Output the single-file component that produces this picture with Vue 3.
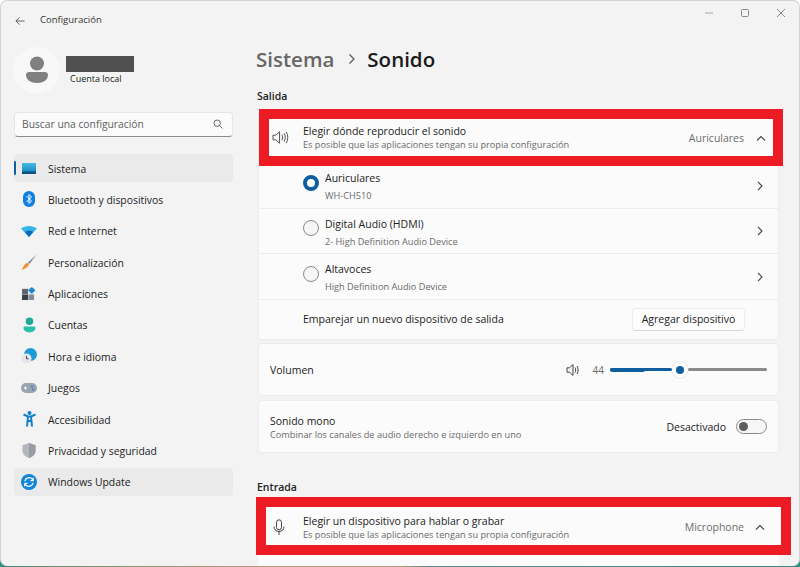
<template>
  <div class="desk">
    <div class="win">
      <div class="titlebar">
        <svg class="back" width="10" height="10" viewBox="0 0 11 10"><path d="M10.500 5H1M5 1 1 5l4 4" fill="none" stroke="#555" stroke-width="1"/></svg>
        <span class="app-title">Configuración</span>
        <div class="win-btns">
          <svg width="10" height="10" viewBox="0 0 10 10"><path d="M1 5h8" stroke="#aaa" fill="none"/></svg>
          <svg width="10" height="10" viewBox="0 0 10 10"><rect x="1.500" y="1.500" width="7" height="7" rx="1" stroke="#888" fill="none"/></svg>
          <svg width="10" height="10" viewBox="0 0 10 10"><path d="M1 1l8 8M9 1l-8 8" stroke="#888" fill="none"/></svg>
        </div>
      </div>

      <div class="body">
        <aside class="side">
          <div class="profile">
            <div class="avatar">
              <svg width="24" height="28" viewBox="0 0 24 28">
                <circle cx="12" cy="7.500" r="7" fill="#808080"/>
                <path d="M1 19c0-2 1.500-3 3-3h16c1.500 0 3 1 3 3 0 5-5 8-11 8S1 24 1 19z" fill="#808080"/>
              </svg>
            </div>
            <div class="who">
              <div class="redacted"></div>
              <div class="local">Cuenta local</div>
            </div>
          </div>

          <div class="search">
            <span>Buscar una configuración</span>
            <svg width="10" height="10" viewBox="0 0 10 10"><circle cx="4.200" cy="4.200" r="3.200" fill="none" stroke="#666"/><path d="M6.500 6.500 9.500 9.500" stroke="#666" fill="none"/></svg>
          </div>

          <nav class="nav">
            <div v-for="item in menu" :key="item.label" class="nav-item" :class="{ active: item.active, soft: item.soft }">
              <span class="nav-icon" v-html="item.icon"></span>
              <span class="nav-label">{{ item.label }}</span>
            </div>
          </nav>
        </aside>

        <main class="main">
          <h1 class="crumb"><span class="parent">Sistema</span><svg width="8" height="12" viewBox="0 0 8 12"><path d="M1.500 1.500 6 6l-4.500 4.500" fill="none" stroke="#555" stroke-width="1.200"/></svg><span>Sonido</span></h1>

          <h2 class="section">Salida</h2>
          <div class="group">
            <div class="marked top">
              <div class="row head">
                <svg class="row-icon" width="17" height="15" viewBox="0 0 18 16"><path d="M1 5.500h3L8 2v12l-4-3.500H1z" fill="none" stroke="#444" stroke-width="1"/><path d="M10.500 5c1 1.800 1 4.200 0 6M12.800 3.500c1.700 2.700 1.700 6.300 0 9M15 2c2.300 3.600 2.300 8.400 0 12" fill="none" stroke="#444" stroke-width="1"/></svg>
                <div class="txt"><div class="t">Elegir dónde reproducir el sonido</div><div class="s">Es posible que las aplicaciones tengan su propia configuración</div></div>
                <span class="val">Auriculares</span>
                <svg class="chev" width="10" height="6" viewBox="0 0 10 6"><path d="M1 5.500 5 1.500l4 4" fill="none" stroke="#444" stroke-width="1.100"/></svg>
              </div>
            </div>
            <div v-for="d in devices" :key="d.name" class="device">
              <span class="radio" :class="{ on: d.on }"></span>
              <div class="txt"><div class="t">{{ d.name }}</div><div class="s dsub">{{ d.sub }}</div></div>
              <svg class="more" width="6" height="10" viewBox="0 0 6 10"><path d="M1 .800 5 5 1 9.200" fill="none" stroke="#444" stroke-width="1.100"/></svg>
            </div>
            <div class="pair">
              <span class="t">Emparejar un nuevo dispositivo de salida</span>
              <button class="add">Agregar dispositivo</button>
            </div>
          </div>

          <div class="card vol">
            <span class="t">Volumen</span>
            <svg class="vol-icon" width="15" height="14" viewBox="0 0 15 14"><path d="M1 4.800h2.500L7 1.500v11L3.500 9.200H1z" fill="none" stroke="#444"/><path d="M9 4.500c.9 1.500.9 3.500 0 5M11 3c1.500 2.300 1.500 5.700 0 8" fill="none" stroke="#444"/></svg>
            <span class="vol-num">44</span>
            <div class="slider">
              <div class="fill"></div>
              <div class="thumb"></div>
              <div class="rest"></div>
            </div>
          </div>

          <div class="card mono">
            <div class="txt"><div class="t">Sonido mono</div><div class="s">Combinar los canales de audio derecho e izquierdo en uno</div></div>
            <span class="state">Desactivado</span>
            <span class="toggle"><i></i></span>
          </div>

          <h2 class="section entrada">Entrada</h2>
          <div class="marked low">
            <div class="row head">
              <svg class="row-icon mic" width="12" height="17" viewBox="0 0 12 17"><rect x="3.500" y=".8" width="5" height="10" rx="2.500" fill="none" stroke="#444"/><path d="M1 7.500c0 3 2 5 5 5s5-2 5-5M6 12.500V16" fill="none" stroke="#444"/></svg>
              <div class="txt"><div class="t">Elegir un dispositivo para hablar o grabar</div><div class="s">Es posible que las aplicaciones tengan su propia configuración</div></div>
              <span class="val">Microphone</span>
              <svg class="chev" width="10" height="6" viewBox="0 0 10 6"><path d="M1 5.500 5 1.500l4 4" fill="none" stroke="#444" stroke-width="1.100"/></svg>
            </div>
          </div>
          <div class="cut">
            <span class="t">Micrófono de auriculares</span>
          </div>
        </main>
      </div>
    </div>
  </div>
</template>

<script setup>
const menu = [
  { label: 'Sistema', active: true, icon: '<svg width="14" height="11" viewBox="0 0 14 11"><defs><linearGradient id="mon" x1="0" y1="0" x2="0" y2="1"><stop offset="0" stop-color="#45bde6"/><stop offset="1" stop-color="#1b87c2"/></linearGradient></defs><rect width="14" height="9" fill="url(#mon)"/><rect y="8.500" width="14" height="2.500" fill="#0d4f80"/></svg>' },
  { label: 'Bluetooth y dispositivos', icon: '<svg width="12" height="16" viewBox="0 0 12 16"><rect width="12" height="16" rx="6" fill="#0f7fe0"/><path d="M3.500 5 8.500 10 6 12.500v-9L8.500 6 3.500 11" fill="none" stroke="#fff" stroke-width="1"/></svg>' },
  { label: 'Red e Internet', icon: '<svg width="16" height="12" viewBox="0 0 16 12"><path d="M0 3.500C4 0 12 0 16 3.500L8 12z" fill="#35b4ea"/><path d="M3.800 7C6 5.300 10 5.300 12.200 7L8 12z" fill="#0a68b8"/></svg>' },
  { label: 'Personalización', icon: '<svg width="16" height="16" viewBox="0 0 16 16"><path d="M15.500 .5 7 8.500l1.500 1.500z" fill="#7b8a99"/><path d="M6.500 8.500 8 10.500C7 14 3 15.500 .5 15.500c2-1.500 2-5.500 6-7z" fill="#f0923a"/></svg>' },
  { label: 'Aplicaciones', icon: '<svg width="14" height="13" viewBox="0 0 15 14"><rect y="2" width="6.500" height="5.500" fill="#5c6670"/><rect y="8" width="6.500" height="6" fill="#3a4048"/><rect x="7" y="8" width="6" height="6" fill="#828c96"/><path d="M10.500 0 14.500 3.500 10.500 7.500 6.500 3.500z" fill="#1a86d8"/></svg>' },
  { label: 'Cuentas', icon: '<svg width="13" height="16" viewBox="0 0 14 16"><circle cx="7" cy="4" r="4" fill="#1fa896"/><path d="M.5 11c0-1 1-1.500 2-1.500h9c1 0 2 .5 2 1.500 0 3-3 5-6.500 5S.5 14 .5 11z" fill="#2cc0aa"/></svg>' },
  { label: 'Hora e idioma', icon: '<svg width="16" height="16" viewBox="0 0 16 16"><circle cx="9.500" cy="6.500" r="6.500" fill="#1c9bd6"/><circle cx="5.500" cy="10.500" r="5" fill="#e4e6ea"/><path d="M5.500 7.800v3h2" fill="none" stroke="#444"/></svg>' },
  { label: 'Juegos', icon: '<svg width="16" height="10" viewBox="0 0 16 10"><rect width="16" height="10" rx="5" fill="#9aa4b0"/><path d="M3 5h3M4.500 3.500v3" stroke="#fff" fill="none"/><circle cx="11" cy="3.500" r="1" fill="#2f7fc4"/><circle cx="12" cy="6.500" r="1" fill="#2f7fc4"/></svg>' },
  { label: 'Accesibilidad', icon: '<svg width="13" height="16" viewBox="0 0 13 16"><circle cx="6.500" cy="2" r="2" fill="#1280cc"/><path d="M.5 3.500 5 5.500h3l4.500-2M5 5.500 4 15.500M8 5.500l1 10M5 10h3" fill="none" stroke="#1280cc" stroke-width="2"/></svg>' },
  { label: 'Privacidad y seguridad', icon: '<svg width="14" height="15" viewBox="0 0 14 16"><path d="M7 0 14 2.500V8c0 4-3 6.500-7 8-4-1.500-7-4-7-8V2.500z" fill="#b4b8bd"/><path d="M7 0 14 2.500V8c0 4-3 6.500-7 8z" fill="#989da3"/></svg>' },
  { label: 'Windows Update', soft: true, icon: '<svg width="16" height="16" viewBox="0 0 16 16"><circle cx="8" cy="8" r="8" fill="#0f86d8"/><path d="M3.800 7.200A4.300 4.300 0 0 1 11.300 5.200L12.200 6.500M12.200 3.800v2.800H9.500M12.200 8.800A4.300 4.300 0 0 1 4.700 10.800L3.800 9.500M3.800 12.200V9.400h2.700" fill="none" stroke="#fff" stroke-width="1.200"/></svg>' }
]

const devices = [
  { name: 'Auriculares', sub: 'WH-CH510', on: true },
  { name: 'Digital Audio (HDMI)', sub: '2- High Definition Audio Device', on: false },
  { name: 'Altavoces', sub: 'High Definition Audio Device', on: false }
]
</script>

<style scoped>
.desk {
  width: 800px;
  height: 567px;
  overflow: hidden;
  background:
    linear-gradient(to right, #2e8f7c 0, #6f8f70 60px, #b89a6c 250px, #b89a6c 395px, #4f8f88 430px, #2f8f80 800px) left bottom / 100% 12px no-repeat,
    #ffffff;
}
.win {
  width: 800px;
  height: 566px;
  box-sizing: border-box;
  overflow: hidden;
  background: #f3f3f3;
  border: 1px solid #d2d2d2;
  border-bottom: 0;
  border-radius: 7px;
  font-family: "Open Sans", "Noto Sans", sans-serif;
  color: #1b1b1b;
  display: flex;
  flex-direction: column;
}
.titlebar {
  height: 39px;
  flex: none;
  display: flex;
  align-items: center;
  padding-left: 14px;
}
.app-title { font-size: 9.500px; margin-left: 15px; margin-top: -2px; color: #333; }
.win-btns { margin-left: auto; display: flex; gap: 26px; padding-right: 13px; margin-top: -15px; }
.body { flex: 1; display: flex; min-height: 0; }
.side { width: 233px; flex: none; padding-left: 13px; box-sizing: border-box; }
.profile { display: flex; align-items: center; height: 48px; margin-top: 6px; }
.avatar {
  width: 47px; height: 47px; border-radius: 50%;
  background: #f8f8f8;
  margin-left: -1px;
  display: flex; align-items: center; justify-content: center;
}
.who { margin-left: 6px; }
.redacted { width: 68px; height: 16px; background: #505050; }
.local { font-size: 9px; margin-left: 4px; color: #222; margin-top: 1px; line-height: 12px; }
.search {
  margin-top: 18px;
  width: 219px; height: 25px;
  box-sizing: border-box;
  background: #fbfbfb;
  border: 1px solid #e6e6e6;
  border-bottom: 1px solid #8c8c8c;
  border-radius: 4px;
  padding: 0 9px 1px 7px;
  display: flex; align-items: center; justify-content: space-between;
  font-size: 10.300px; color: #5f5f5f;
}
.nav { margin-top: 17px; display: flex; flex-direction: column; gap: 3.400px; }
.nav-item {
  width: 219px; height: 28px;
  border-radius: 4px;
  display: flex; align-items: center;
  font-size: 10.400px;
  color: #222;
  position: relative;
}
.nav-label { padding-top: 1px; }
.nav-item.active, .nav-item.soft { background: #eaeaea; }
.nav-item.active::before {
  content: "";
  position: absolute;
  left: 0; top: 7px;
  width: 2px; height: 14px;
  background: #0f5fa0;
  border-radius: 1px;
}
.nav-icon { width: 34px; flex: none; display: flex; align-items: center; justify-content: center; padding-right: 4px; box-sizing: border-box; }
.nav-icon :deep(svg) { display: block; }
.main { flex: 1; padding-left: 23px; min-width: 0; }
.crumb {
  margin: 2px 0 0 -1px;
  height: 33px;
  display: flex; align-items: center;
  font-size: 20.500px; font-weight: 600;
  color: #1a1a1a;
}
.crumb .parent { color: #666666; }
.crumb svg { margin: 0 11px 0 14px; }
.section { font-size: 10.500px; font-weight: 600; margin: 0; line-height: 14px; color: #222; }
.main > .section { margin-top: 14px; }
.group {
  width: 521px;
  margin: 6px 0 0 1px;
  background: #fbfbfb;
  border: 1px solid #ececec;
  border-radius: 4px;
  box-sizing: border-box;
  position: relative;
  padding-top: 53px;
}
.marked {
  background: #ed1c24;
  padding: 10px;
  box-sizing: border-box;
}
.top { position: absolute; left: 0; top: -1px; width: 524px; height: 57px; }
.low { width: 535px; height: 58px; margin: 3px 0 0 -1px; position: relative; }
.row { height: 100%; background: #fbfbfb; display: flex; align-items: center; box-sizing: border-box; }
.row-icon { margin-left: 3px; flex: none; }
.mic { margin-left: 7px; }
.row .txt { margin-left: 14px; flex: 1; min-width: 0; }
.low .row { padding-top: 3px; }
.low .row .txt { margin-left: 18px; }
.t { font-size: 10.500px; color: #222; line-height: 14px; }
.s { font-size: 9.200px; color: #6a6a6a; line-height: 13px; }
.val { font-size: 10.500px; color: #6d6d6d; }
.chev { margin: 0 7px 0 12px; flex: none; }
.low .chev { margin: 0 16px 0 11px; }
.device {
  height: 45.600px;
  display: flex; align-items: center;
  padding-top: 3px;
  border-bottom: 1px solid #ececec;
  box-sizing: border-box;
}
.radio {
  width: 16px; height: 16px; box-sizing: border-box;
  border-radius: 50%;
  border: 1px solid #8a8a8a;
  margin: 0 6px 8px 44px;
  background: #f6f6f6;
  flex: none;
}
.radio.on { border: 4px solid #0f5fa0; background: #fff; }
.device .txt { flex: 1; }
.device .dsub { margin-top: 4px; }
.more { margin: -2px 15px 0 0; }
.pair { height: 39px; display: flex; align-items: center; padding-left: 44px; }
.add {
  margin-left: auto; margin-right: 33px;
  width: 113px; height: 23px;
  font: inherit; font-size: 10.500px; color: #222;
  background: #fdfdfd;
  border: 1px solid #ececec;
  border-bottom-color: #d8d8d8;
  border-radius: 4px;
}
.card {
  width: 521px; height: 53px;
  box-sizing: border-box;
  background: #fbfbfb;
  border: 1px solid #ececec;
  border-radius: 4px;
  margin: 4px 0 0 1px;
  display: flex; align-items: center;
  padding: 0 11px;
}
.vol { margin-top: 3px; padding-top: 1px; }
.vol-icon { margin-left: auto; margin-right: 12px; }
.vol-num { font-size: 10px; color: #6a6a6a; margin-right: 6px; }
.slider { width: 157px; height: 3px; display: flex; align-items: center; position: relative; }
.fill { width: 62px; height: 3px; background: #0f5fa0; border-radius: 2px; position: relative; }
.fill::before {
  content: "";
  position: absolute;
  left: 0; top: -0.500px;
  width: 35px; height: 4px;
  background: #0f5fa0;
  border-radius: 2px;
}
.thumb {
  width: 16px; height: 16px;
  box-sizing: border-box;
  border-radius: 50%;
  background: #0f5fa0;
  border: 4px solid #fff;
  box-shadow: 0 0 1px rgba(0, 0, 0, 0.3);
  flex: none;
}
.rest { flex: 1; height: 3px; background: #8a8a8a; border-radius: 2px; }
.mono .txt { flex: 1; padding-top: 2px; }
.state { font-size: 10.500px; margin: 1px 10px 0 0; color: #222; }
.toggle {
  width: 31px; height: 15px; box-sizing: border-box;
  border: 1px solid #8a8a8a; border-radius: 8px;
  display: flex; align-items: center; padding-left: 2px;
  background: #f6f6f6;
}
.toggle i { width: 9px; height: 9px; border-radius: 50%; background: #5c5c5c; display: block; }
.main > .entrada { margin-top: 27px; }
.cut {
  width: 521px;
  margin-left: 1px;
  height: 30px;
  padding: 8px 0 0 67px;
  box-sizing: border-box;
  background: #fbfbfb;
}
</style>
